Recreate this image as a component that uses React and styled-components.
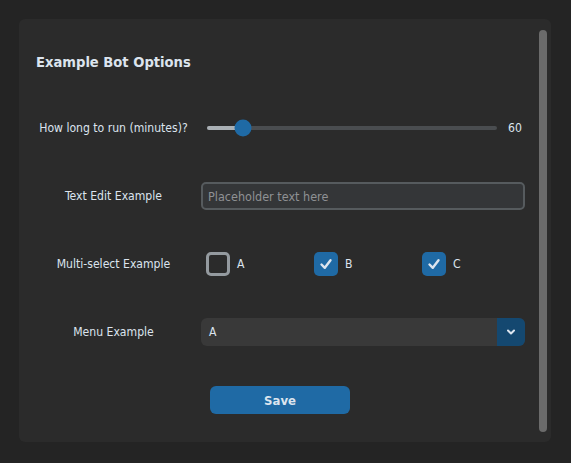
import React from "react";
import styled, { createGlobalStyle } from "styled-components";

const Global = createGlobalStyle`
  html, body { margin: 0; padding: 0; background: #242424; }
  body {
    font-family: "DejaVu Sans Condensed", "DejaVu Sans", sans-serif;
    color: #dce4ee;
    width: 571px;
    height: 463px;
    overflow: hidden;
  }
`;

const Page = styled.div`
  padding: 19px 20px 21px 19px;
  box-sizing: border-box;
  width: 571px;
  height: 463px;
`;

const Panel = styled.div`
  display: flex;
  height: 100%;
  background: #2b2b2b;
  border-radius: 6px;
  padding: 11px 4px 10px 0;
  box-sizing: border-box;
`;

const Content = styled.div`
  flex: 1;
  display: grid;
  grid-template-columns: 155px 324px;
  column-gap: 10px;
  row-gap: 40px;
  grid-auto-rows: 28px;
  padding: 16px 14px 0 17px;
  align-content: start;
`;

const Scrollbar = styled.div`
  width: 8px;
  background: #6b6b6b;
  border-radius: 4px;
`;

const Title = styled.h2`
  grid-column: 1 / span 2;
  margin: 0;
  padding-top: 2px;
  font-size: 14.6px;
  font-weight: bold;
  display: flex;
  align-items: center;
  color: #dce4ee;
`;

const Label = styled.div`
  font-size: 12.1px;
  display: flex;
  align-items: center;
  justify-content: center;
  text-align: center;
  white-space: nowrap;
`;

const SliderRow = styled.div`
  display: flex;
  align-items: center;
  padding-left: 6px;
`;

const Track = styled.div`
  position: relative;
  flex: 1;
  height: 4px;
  border-radius: 2px;
  background: #4a4d50;
`;

const Fill = styled.div`
  height: 100%;
  border-radius: 2px;
  background: #aab0b5;
`;

const Thumb = styled.div`
  position: absolute;
  top: 50%;
  width: 17px;
  height: 17px;
  border-radius: 50%;
  background: #1f6aa5;
  transform: translate(-50%, -50%);
`;

const Value = styled.div`
  width: 17px;
  margin-left: 11px;
  font-size: 12.1px;
`;

const Input = styled.input`
  box-sizing: border-box;
  width: 100%;
  height: 28px;
  background: #343638;
  border: 2px solid #565b5e;
  border-radius: 5px;
  color: #dce4ee;
  font-family: inherit;
  font-size: 12.5px;
  padding: 0 5px;
  outline: none;
  &::placeholder { color: #8f9194; }
`;

const Checks = styled.div`
  display: grid;
  grid-template-columns: repeat(3, 108px);
  align-items: center;
  padding-left: 5px;
`;

const CheckItem = styled.label`
  display: flex;
  align-items: center;
  gap: 7px;
  font-size: 12.1px;
`;

const Box = styled.span`
  box-sizing: border-box;
  width: 24px;
  height: 24px;
  border-radius: 5px;
  display: flex;
  align-items: center;
  justify-content: center;
  background: ${(p) => (p.$checked ? "#1f6aa5" : "transparent")};
  border: ${(p) => (p.$checked ? "none" : "3px solid #949a9f")};
`;

const Menu = styled.div`
  display: flex;
  height: 28px;
  border-radius: 6px;
  overflow: hidden;
  background: #393939;
`;

const MenuText = styled.div`
  flex: 1;
  display: flex;
  align-items: center;
  padding-left: 8px;
  font-size: 12.1px;
`;

const MenuButton = styled.div`
  width: 28px;
  background: #144870;
  display: flex;
  align-items: center;
  justify-content: center;
`;

const SaveCell = styled.div`
  grid-column: 2;
  padding-left: 9px;
`;

const SaveButton = styled.button`
  width: 140px;
  height: 28px;
  border: none;
  border-radius: 6px;
  background: #1f6aa5;
  color: #dce4ee;
  font-family: inherit;
  font-weight: bold;
  font-size: 13px;
`;

const Check = () => (
  <svg width="14" height="14" viewBox="0 0 14 14">
    <path d="M2.5 7.5 L5.8 10.8 L11.5 3.2" fill="none" stroke="#dce4ee" strokeWidth="2.4" strokeLinecap="round" strokeLinejoin="round" />
  </svg>
);

const Chevron = () => (
  <svg width="10" height="8" viewBox="0 0 10 8">
    <path d="M2 2.5 L5 5.5 L8 2.5" fill="none" stroke="#dce4ee" strokeWidth="2" strokeLinecap="round" strokeLinejoin="round" />
  </svg>
);

const CheckBox = ({ label, checked }) => (
  <CheckItem>
    <Box $checked={checked}>{checked && <Check />}</Box>
    {label}
  </CheckItem>
);

export default function App() {
  const pct = 60 / 480;
  return (
    <>
      <Global />
      <Page>
        <Panel>
          <Content>
            <Title>Example Bot Options</Title>
            <Label>How long to run (minutes)?</Label>
            <SliderRow>
              <Track>
                <Fill style={{ width: `${pct * 100}%` }} />
                <Thumb style={{ left: `${pct * 100}%` }} />
              </Track>
              <Value>60</Value>
            </SliderRow>
            <Label>Text Edit Example</Label>
            <Input placeholder="Placeholder text here" />
            <Label>Multi-select Example</Label>
            <Checks>
              <CheckBox label="A" />
              <CheckBox label="B" checked />
              <CheckBox label="C" checked />
            </Checks>
            <Label>Menu Example</Label>
            <Menu>
              <MenuText>A</MenuText>
              <MenuButton><Chevron /></MenuButton>
            </Menu>
            <SaveCell>
              <SaveButton>Save</SaveButton>
            </SaveCell>
          </Content>
          <Scrollbar />
        </Panel>
      </Page>
    </>
  );
}
